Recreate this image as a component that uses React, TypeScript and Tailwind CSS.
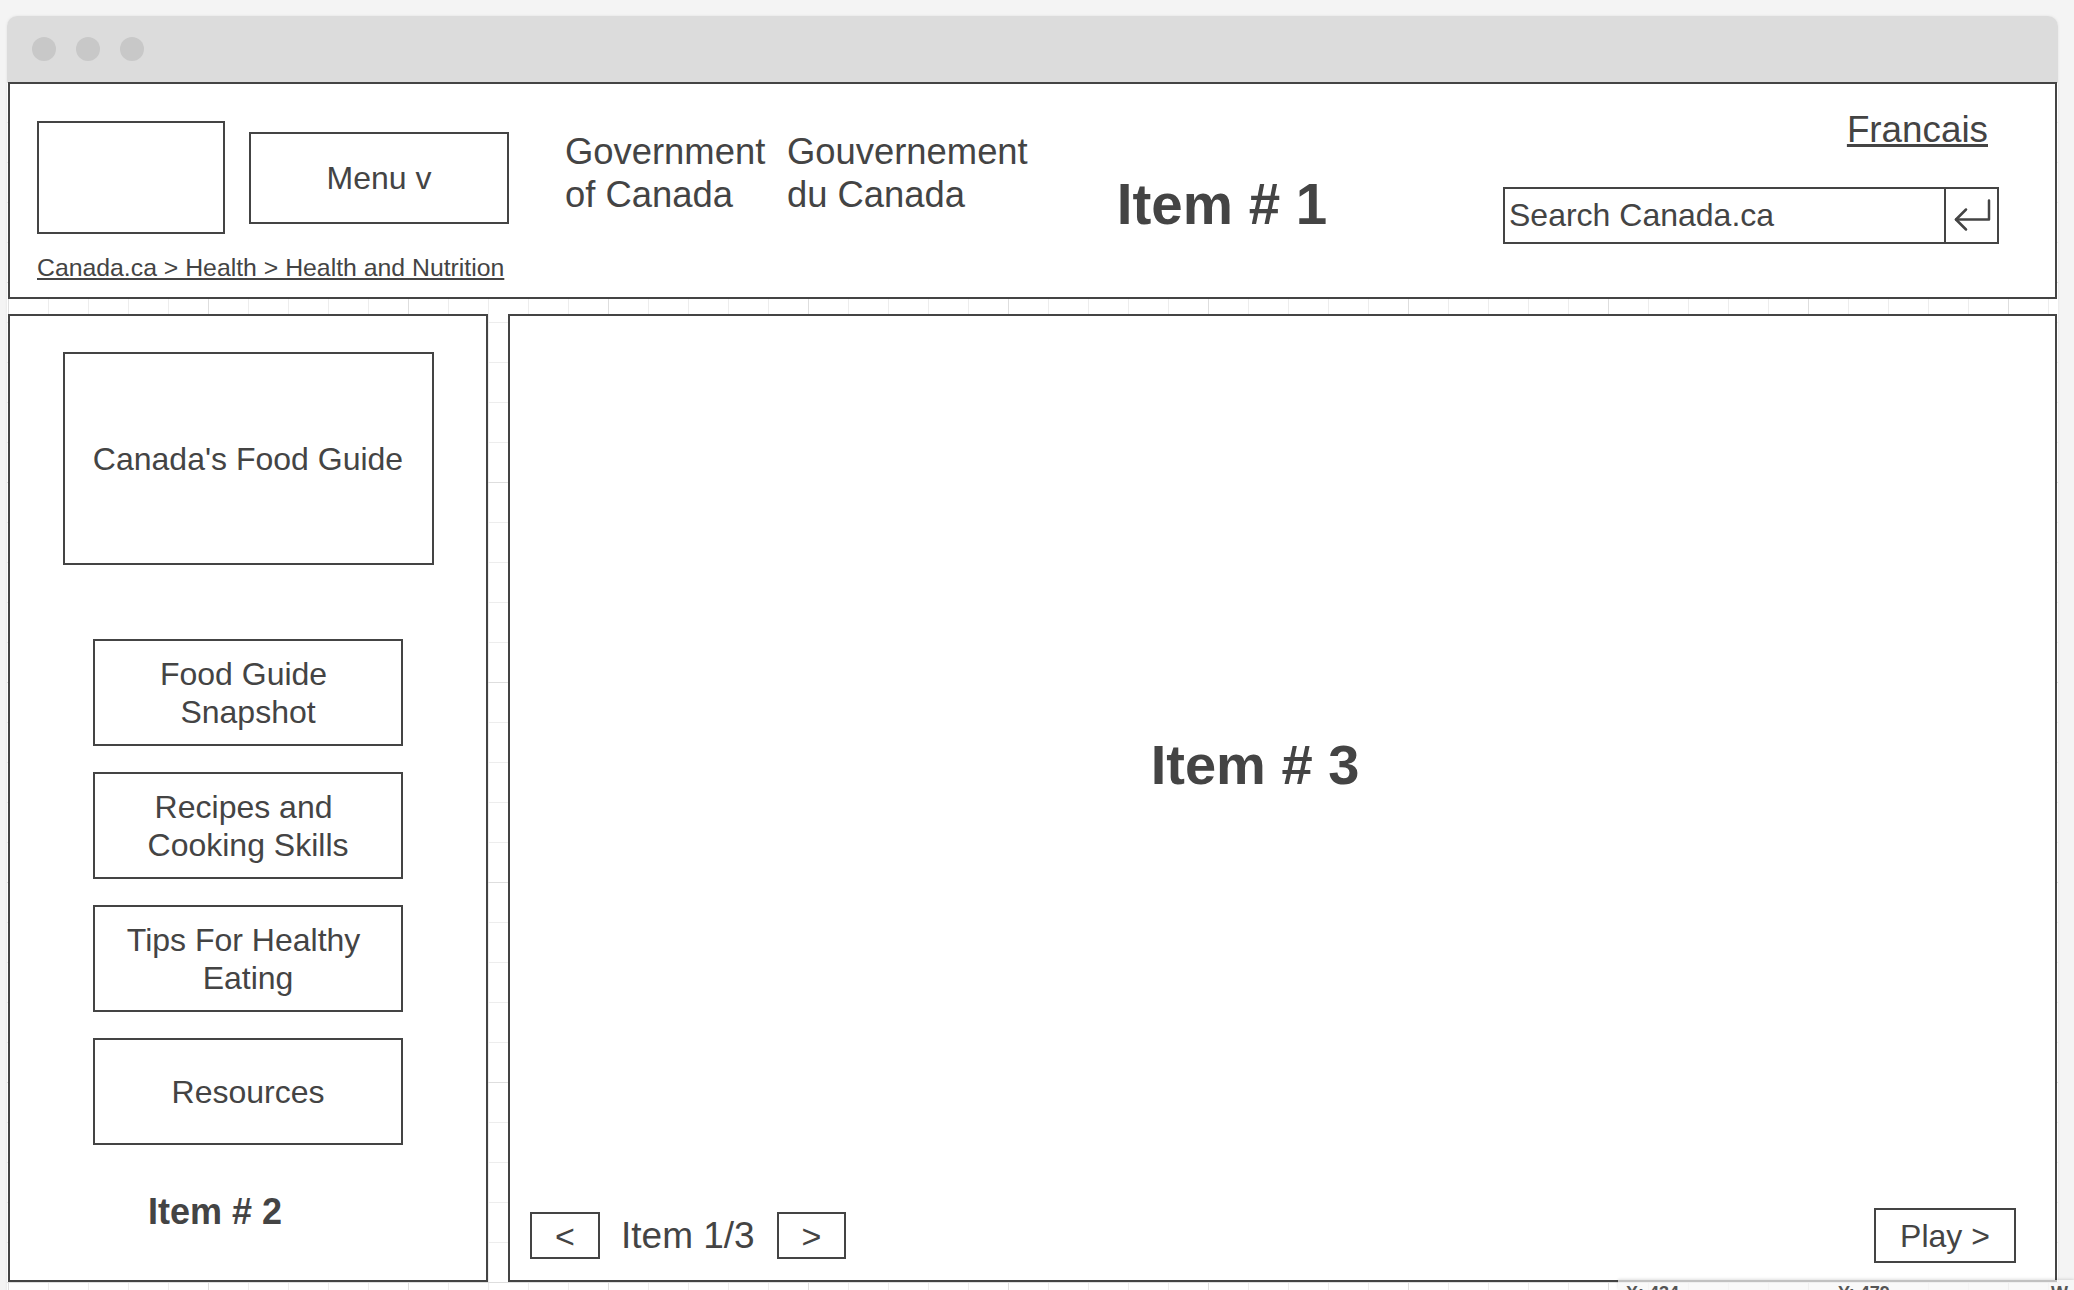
import React from 'react';

// first lines keep a trailing space, like the wrapped labels in the mockup
const navItems: string[][] = [
  ['Food Guide\u00a0', 'Snapshot'],
  ['Recipes and\u00a0', 'Cooking Skills'],
  ['Tips For Healthy\u00a0', 'Eating'],
  ['Resources'],
];

function EnterIcon() {
  return (
    <svg width="38" height="32" viewBox="0 0 38 32" fill="none" stroke="#444" strokeWidth="2.5" strokeLinecap="round" strokeLinejoin="round">
      <path d="M36 1.5V20.5H3" />
      <path d="M13 10.5L3 20.5L13 30.5" />
    </svg>
  );
}

function Header() {
  return (
    <header className="flex h-[217px] border-2 border-[#444] bg-white">
      <div className="flex w-[499px] shrink-0 flex-col pl-[27px] pt-[37px]">
        <div className="flex items-center gap-[24px]">
          <div className="h-[113px] w-[188px] border-2 border-[#444]" />
          <div className="flex h-[92px] w-[260px] items-center justify-center border-2 border-[#444] text-[32px] leading-none">Menu v</div>
        </div>
        <a className="mt-[22px] whitespace-nowrap text-[24.8px] leading-none underline">Canada.ca &gt; Health &gt; Health and Nutrition</a>
      </div>

      <div className="ml-[56px] flex shrink-0 pt-[46px] text-[36.4px] leading-[43px]">
        <div className="w-[222px]">
          <div>Government</div>
          <div>of Canada</div>
        </div>
        <div className="w-[260px]">
          <div>Gouvernement</div>
          <div>du Canada</div>
        </div>
      </div>

      <div className="ml-[25px] w-[300px] shrink-0 pt-[93px] text-center text-[56.5px] font-bold leading-none">Item # 1</div>

      <div className="ml-auto mr-[56px] flex flex-col items-end pt-[28px]">
        <a className="mr-[11px] text-[36.8px] leading-none underline">Francais</a>
        <div className="mt-[38px] flex h-[57px] w-[496px] border-2 border-[#444]">
          <div className="flex flex-1 items-center pl-[4px] text-[32px] leading-none">Search Canada.ca</div>
          <div className="flex w-[53px] items-center justify-center border-l-2 border-[#444]">
            <EnterIcon />
          </div>
        </div>
      </div>
    </header>
  );
}

function SideNav() {
  return (
    <aside className="flex h-[968px] w-[480px] shrink-0 flex-col items-center border-2 border-[#444] bg-white pt-[36px]">
      <div className="flex h-[213px] w-[371px] items-center justify-center border-2 border-[#444] text-[32px] leading-none">
        Canada's Food Guide
      </div>
      <div className="mt-[74px] flex flex-col gap-[26px]">
        {navItems.map((lines) => (
          <div key={lines[0]} className="flex h-[107px] w-[310px] flex-col items-center justify-center border-2 border-[#444] text-center text-[32px] leading-[38px]">
            {lines.map((l) => (
              <span key={l} className="whitespace-pre">{l}</span>
            ))}
          </div>
        ))}
      </div>
      <div className="mt-[49px] self-start pl-[138px] text-[36px] font-bold leading-none">Item # 2</div>
    </aside>
  );
}

function Carousel() {
  return (
    <section className="flex h-[968px] flex-1 flex-col border-2 border-[#444] bg-white">
      <div className="flex-1">
        <div className="ml-[545px] mt-[421px] w-[400px] text-center text-[56px] font-bold leading-none">Item # 3</div>
      </div>
      <div className="flex items-center pb-[17px] pl-[20px] pr-[39px]">
        <div className="flex h-[47px] w-[70px] items-center justify-center border-2 border-[#444] text-[34px] leading-none">&lt;</div>
        <div className="ml-[21px] w-[134px] text-[37px] leading-none">Item 1/3</div>
        <div className="ml-[22px] flex h-[47px] w-[69px] items-center justify-center border-2 border-[#444] text-[34px] leading-none">&gt;</div>
        <div className="ml-auto flex h-[55px] w-[142px] items-center justify-center border-2 border-[#444] text-[32px] leading-none">Play &gt;</div>
      </div>
    </section>
  );
}

export default function App() {
  return (
    <div className="relative h-[1290px] w-full overflow-hidden bg-[#f4f4f4] font-['Liberation_Sans',Arial,sans-serif] text-[#444]">
      <div className="ml-[7px] mt-[16px] w-[2051px] overflow-hidden rounded-t-[10px] shadow-[0_0_3px_rgba(0,0,0,0.08)]">
        <div className="flex h-[66px] items-center gap-[20px] bg-[#dcdcdc] pl-[25px]">
          <span className="h-[24px] w-[24px] rounded-full bg-[#c8c8c8]" />
          <span className="h-[24px] w-[24px] rounded-full bg-[#c8c8c8]" />
          <span className="h-[24px] w-[24px] rounded-full bg-[#c8c8c8]" />
        </div>
        <div className="h-[1300px] bg-white px-[1px] [background-image:linear-gradient(to_right,#dedede_1px,transparent_1px),linear-gradient(to_bottom,#dedede_1px,transparent_1px),linear-gradient(to_right,#ededed_1px,transparent_1px),linear-gradient(to_bottom,#ededed_1px,transparent_1px)] [background-position:1px_0] [background-size:200px_200px,200px_200px,40px_40px,40px_40px]">
          <Header />
          <div className="mt-[15px] flex gap-[20px]">
            <SideNav />
            <Carousel />
          </div>
        </div>
      </div>

      <div className="absolute bottom-0 left-[1618px] right-0 top-[1280px] bg-[#f6f6f6]/70 shadow-[0_-1px_3px_rgba(0,0,0,0.12)]">
        <div className="flex pt-[4px] text-[18px] font-bold leading-none text-[#555]">
          <span className="ml-[8px] w-[212px]">X: 434</span>
          <span className="w-[213px]">Y: 479</span>
          <span>W</span>
        </div>
      </div>
    </div>
  );
}
